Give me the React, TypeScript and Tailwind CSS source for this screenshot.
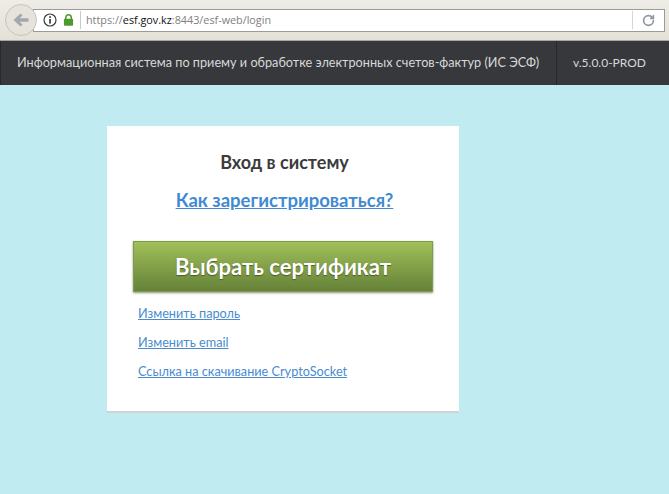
import { RotateCw } from "lucide-react";

const font = "font-['Lato','Open_Sans','Noto_Sans',sans-serif]";

function BrowserBar() {
  return (
    <div className="flex h-[41px] items-center border-b border-[#a9a8a3] bg-gradient-to-b from-[#eeece6] to-[#e4e1d9] pl-[5px] pr-[4px]">
      <div className="relative z-10 flex h-[32px] w-[32px] shrink-0 items-center justify-center rounded-full border border-[#c6c4bc] bg-[#e6e3dc]">
        <svg viewBox="0 0 16 14" className="h-[14px] w-[16px]">
          <path d="M7.5 0.5 L0.5 7 L7.5 13.5 L9.5 11.4 L6.6 8.8 H15.5 V5.2 H6.6 L9.5 2.6 Z" fill="#a2a8ae" />
        </svg>
      </div>
      <div className="-ml-[4px] flex h-[23px] flex-1 items-center border border-[#9b9b97] bg-white pl-[9px] pr-[9px] font-['Open_Sans',sans-serif] text-[10.8px] text-[#808080]">
        <svg viewBox="0 0 14 14" className="h-[14px] w-[14px] shrink-0">
          <circle cx="7" cy="7" r="6" fill="white" stroke="#3a3a3a" strokeWidth="1.2" />
          <rect x="6.2" y="6" width="1.7" height="4.6" fill="#3a3a3a" />
          <rect x="6.2" y="3.2" width="1.7" height="1.7" fill="#3a3a3a" />
        </svg>
        <svg viewBox="0 0 12 14" className="ml-[6px] h-[14px] w-[11px] shrink-0">
          <path d="M3 6V4.2a3 3 0 0 1 6 0V6" fill="none" stroke="#4f9a2c" strokeWidth="1.7" />
          <rect x="1" y="5.6" width="10" height="7.6" rx="1" fill="#4f9a2c" />
        </svg>
        <div className="ml-[6px] mr-[5px] h-[18px] w-px bg-[#c9c9c9]" />
        <span>
          https://<span className="text-[#111]">esf.gov.kz</span>:8443/esf-web/login
        </span>
        <div className="ml-auto mr-[9px] h-[18px] w-px bg-[#d5d5d5]" />
        <RotateCw className="h-[13px] w-[13px] text-[#8f969e]" strokeWidth={3} />
      </div>
    </div>
  );
}

function TopNav() {
  return (
    <div className={`flex h-[44px] items-center justify-between border-l border-[#27282b] bg-[#36383c] text-[12.7px] text-[#d8d8d8] ${font}`}>
      <div className="whitespace-nowrap pl-[16px]">Информационная система по приему и обработке электронных счетов-фактур (ИС ЭСФ)</div>
      <div className="flex h-full w-[113px] items-center border-l border-[#26272a] pl-[16px] text-[12px]">v.5.0.0-PROD</div>
    </div>
  );
}

function LoginCard() {
  return (
    <div className={`ml-[107px] mt-[41px] h-[287px] w-[352px] border-b-2 border-[#cfd3d4] bg-white pl-[26px] pr-[23px] pt-[24px] ${font}`}>
      <h1 className="text-center text-[18px] font-bold leading-[24px] text-[#3b3b3b]">Вход в систему</h1>
      <div className="mt-[13px] text-center">
        <a href="#" className="text-[18.5px] font-bold leading-[26px] text-[#3f8ad2] underline">
          Как зарегистрироваться?
        </a>
      </div>
      <button className="mt-[28px] block h-[51px] w-[300px] border border-[#7d9a50] bg-gradient-to-b from-[#a1c059] to-[#668239] text-[22px] font-bold text-white shadow-[0_1px_2px_rgba(90,110,50,0.7)] [text-shadow:0_1px_1px_rgba(40,50,20,0.6)]">
        Выбрать сертификат
      </button>
      <ul className="mt-[11px] flex flex-col gap-[9px] pl-[5px] text-[12.7px] leading-[20px] text-[#4a8bd0]">
        <li><a href="#" className="underline">Изменить пароль</a></li>
        <li><a href="#" className="underline">Изменить email</a></li>
        <li><a href="#" className="underline">Ссылка на скачивание CryptoSocket</a></li>
      </ul>
    </div>
  );
}

export default function App() {
  return (
    <div className="h-[494px] w-[669px] overflow-hidden bg-[#bfebf1]">
      <BrowserBar />
      <TopNav />
      <LoginCard />
    </div>
  );
}
